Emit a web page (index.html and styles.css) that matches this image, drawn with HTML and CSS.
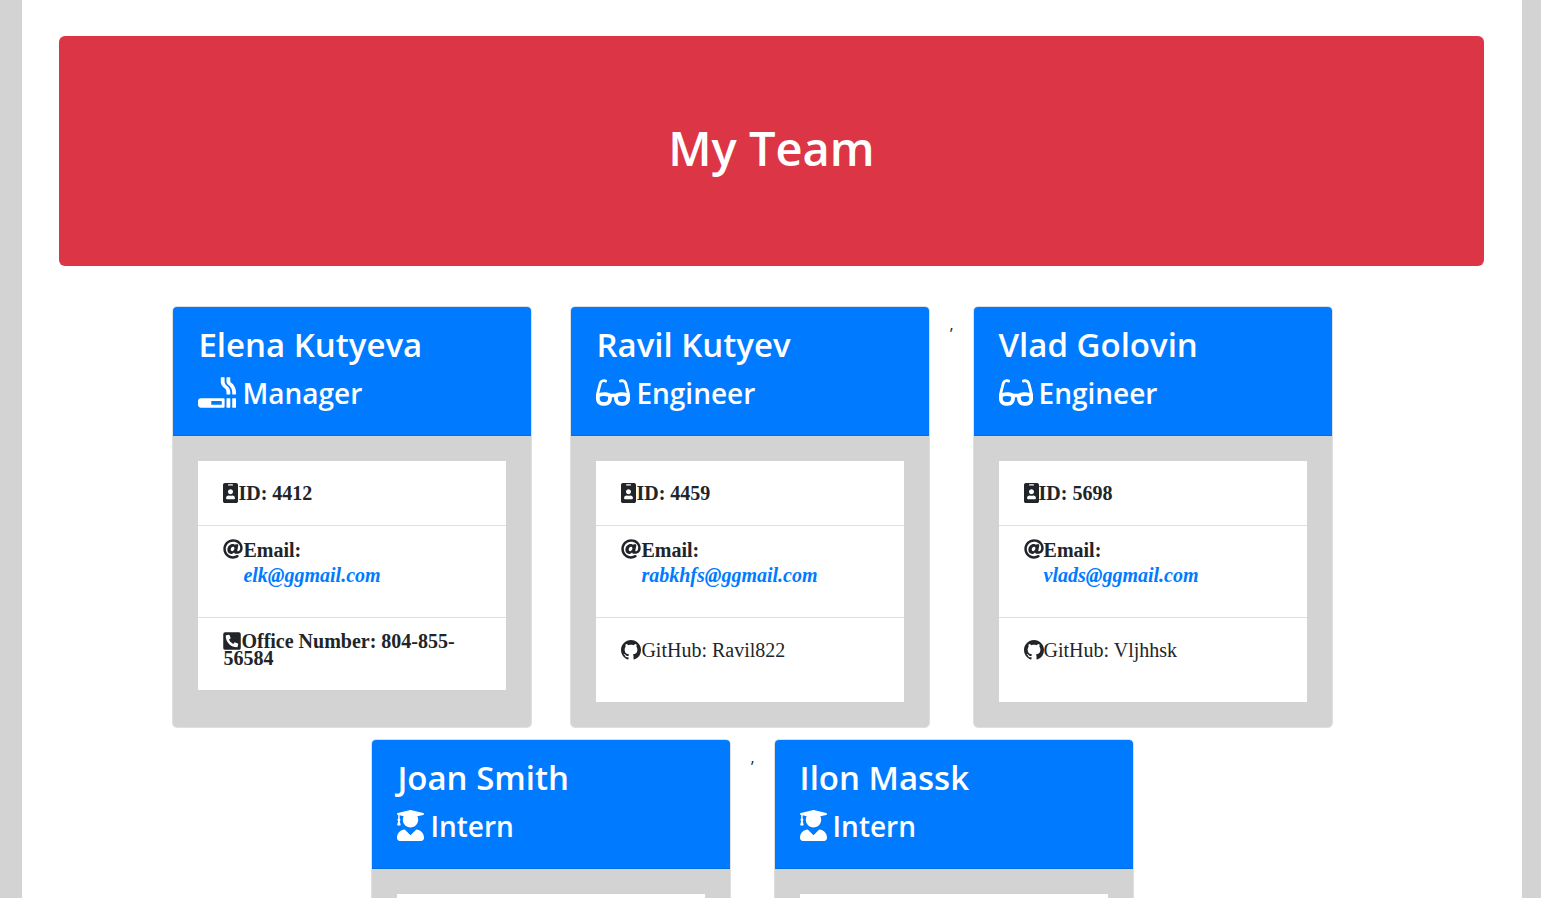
FILE: index.html
```
<!DOCTYPE html>
<html lang="en">
<head>
<meta charset="utf-8">
<title>My Team</title>
<link rel="stylesheet" href="styles.css">
</head>
<body>
<svg class="sprite" aria-hidden="true">
  <symbol id="smoking" viewBox="0 0 640 512"><path d="M632 352h-48c-4.400 0-8 3.600-8 8v144c0 4.400 3.600 8 8 8h48c4.400 0 8-3.600 8-8V360c0-4.400-3.600-8-8-8zM553.300 87.100c-5.700-3.800-9.300-10-9.300-16.800V8c0-4.400-3.600-8-8-8h-48c-4.400 0-8 3.600-8 8v62.300c0 22 10.200 43.400 28.600 55.400 42.200 27.300 67.400 73.800 67.400 124.300V280c0 4.400 3.600 8 8 8h48c4.400 0 8-3.600 8-8v-30.300c0-65.500-32.400-126.200-86.700-162.600zM432 352H48c-26.500 0-48 21.500-48 48v64c0 26.500 21.500 48 48 48h384c8.800 0 16-7.200 16-16V368c0-8.800-7.200-16-16-16zm-32 112H224v-64h176v64zm87.700-322.400C463.800 125 448 99.300 448 70.300V8c0-4.400-3.600-8-8-8h-48c-4.400 0-8 3.600-8 8v66.400c0 43.700 24.600 81.600 60.300 106.700 22.400 15.700 35.700 41.200 35.700 68.600V280c0 4.400 3.600 8 8 8h48c4.400 0 8-3.600 8-8v-30.300c0-43.300-21-83.400-56.300-108.100zM536 352h-48c-4.400 0-8 3.600-8 8v144c0 4.400 3.600 8 8 8h48c4.400 0 8-3.600 8-8V360c0-4.400-3.600-8-8-8z"/></symbol>
  <symbol id="glasses" viewBox="0 0 576 512"><path d="M574.100 280.370L528.750 98.660c-5.910-23.700-21.590-44.050-43-55.810-21.440-11.730-46.970-14.110-70.190-6.330l-15.250 5.080c-8.390 2.790-12.920 11.860-10.120 20.240l5.060 15.180c2.790 8.380 11.850 12.910 20.230 10.120l13.180-4.390c10.870-3.620 23-3.570 33.160 1.730 10.290 5.370 17.570 14.560 20.370 25.820l38.460 153.820c-22.190-6.810-49.790-12.460-81.200-12.460-34.770 0-73.980 7.020-114.850 26.740h-73.180c-40.870-19.740-80.080-26.750-114.860-26.750-31.420 0-59.020 5.650-81.210 12.460l38.460-153.830c2.790-11.250 10.090-20.450 20.380-25.810 10.160-5.300 22.280-5.350 33.150-1.730l13.170 4.390c8.380 2.790 17.440-1.740 20.230-10.120l5.060-15.180c2.800-8.380-1.730-17.450-10.120-20.240l-15.250-5.080c-23.220-7.780-48.750-5.410-70.190 6.330-21.410 11.770-37.090 32.110-43 55.800L1.900 280.370A64.218 64.218 0 0 0 0 295.860v70.250C0 429.010 51.580 480 115.200 480h37.120c60.280 0 110.370-45.940 114.880-105.370l2.930-38.630h35.750l2.930 38.630C313.310 434.060 363.400 480 423.680 480h37.120c63.620 0 115.200-50.990 115.200-113.880v-70.250c0-5.230-.64-10.430-1.900-15.500zm-370.720 89.420c-1.970 25.910-24.400 46.210-51.060 46.210H115.200C86.970 416 64 393.620 64 366.110v-37.540c18.120-6.490 43.420-12.920 72.580-12.920 23.860 0 47.260 4.330 69.930 12.920l-3.130 41.220zM512 366.120c0 27.510-22.970 49.880-51.200 49.880h-37.120c-26.670 0-49.100-20.300-51.060-46.210l-3.130-41.220c22.670-8.590 46.080-12.920 69.950-12.920 29.120 0 54.430 6.440 72.550 12.930v37.540z"/></symbol>
  <symbol id="graduate" viewBox="0 0 448 512"><path d="M319.400 320.600L224 416l-95.400-95.400C57.100 323.700 0 382.200 0 454.400v9.600c0 26.500 21.500 48 48 48h352c26.500 0 48-21.500 48-48v-9.600c0-72.200-57.100-130.700-128.600-133.800zM13.600 79.800l6.400 1.500v58.400c-7 4.200-12 11.500-12 20.300 0 8.400 4.600 15.400 11.100 19.700L3.500 242c-1.700 6.900 2.100 14 7.600 14h41.800c5.500 0 9.300-7.100 7.600-14l-15.600-62.300C51.400 175.400 56 168.400 56 160c0-8.800-5-16.100-12-20.300V87.100l66 15.900c-8.600 17.200-14 36.400-14 57 0 70.700 57.300 128 128 128s128-57.300 128-128c0-20.600-5.300-39.800-14-57l96.300-23.200c18.200-4.400 18.200-27.100 0-31.500l-190.400-46c-13-3.100-26.700-3.100-39.700 0L13.600 48.200c-18.100 4.400-18.100 27.200 0 31.600z"/></symbol>
  <symbol id="badge" viewBox="0 0 384 512"><path d="M336 0H48C21.500 0 0 21.500 0 48v416c0 26.500 21.500 48 48 48h288c26.500 0 48-21.500 48-48V48c0-26.500-21.500-48-48-48zM144 32h96c8.800 0 16 7.200 16 16s-7.200 16-16 16h-96c-8.800 0-16-7.200-16-16s7.200-16 16-16zm48 128c35.300 0 64 28.700 64 64s-28.700 64-64 64-64-28.700-64-64 28.700-64 64-64zm112 236.800c0 10.600-10 19.200-22.400 19.200H102.400C90 416 80 407.400 80 396.800v-19.200c0-31.800 30.100-57.600 67.200-57.600h5c12.300 5.100 25.700 8 39.800 8s27.600-2.900 39.800-8h5c37.100 0 67.200 25.800 67.200 57.600v19.200z"/></symbol>
  <symbol id="at" viewBox="0 0 512 512"><path d="M256 8C118.941 8 8 118.919 8 256c0 137.059 110.919 248 248 248 48.154 0 95.342-14.140 135.408-40.223 12.005-7.815 14.625-24.288 5.552-35.372l-10.177-12.433c-7.671-9.371-21.179-11.667-31.373-5.129C325.920 429.757 291.314 440 256 440c-101.458 0-184-82.542-184-184S154.542 72 256 72c100.139 0 184 57.619 184 160 0 38.786-21.093 79.742-58.170 83.693-17.349-.454-16.910-12.857-13.476-30.024l23.433-121.110C394.653 149.750 383.308 136 368.225 136h-44.981a13.518 13.518 0 0 0-13.432 11.993l-.01.092c-14.697-17.901-40.448-21.775-59.971-21.775-74.580 0-137.831 62.234-137.831 151.460 0 65.303 36.785 105.870 96 105.870 26.984 0 57.369-15.637 74.991-38.333 9.522 34.104 40.613 34.103 70.710 34.103C462.609 379.410 504 307.798 504 232 504 95.653 394.023 8 256 8zm-21.680 304.430c-22.249 0-36.070-15.623-36.070-40.771 0-44.993 30.779-72.729 58.630-72.729 22.292 0 35.601 15.241 35.601 40.770 0 45.061-33.875 72.730-58.161 72.730z"/></symbol>
  <symbol id="phone" viewBox="0 0 448 512"><path d="M400 32H48A48 48 0 0 0 0 80v352a48 48 0 0 0 48 48h352a48 48 0 0 0 48-48V80a48 48 0 0 0-48-48zm-16.390 307.370l-15 65A15 15 0 0 1 354 416C194 416 64 286.290 64 126a15.700 15.700 0 0 1 11.630-14.610l65-15A18.230 18.230 0 0 1 144 96a16.270 16.270 0 0 1 13.790 9.090l30 70A17.900 17.900 0 0 1 189 181a17 17 0 0 1-5.500 11.610l-37.890 31a231.910 231.910 0 0 0 110.780 110.780l31-37.890A17 17 0 0 1 299 291a17.850 17.850 0 0 1 5.910 1.210l70 30A16.250 16.250 0 0 1 384 336a17.410 17.410 0 0 1-.39 3.370z"/></symbol>
  <symbol id="github" viewBox="0 0 16 16"><path d="M8 0C3.580 0 0 3.580 0 8c0 3.540 2.290 6.530 5.470 7.590.4.07.55-.17.55-.38 0-.19-.01-.82-.01-1.490-2.010.37-2.530-.49-2.690-.94-.09-.23-.48-.94-.82-1.130-.28-.15-.68-.52-.01-.53.63-.01 1.080.58 1.230.82.72 1.210 1.870.87 2.330.66.07-.52.28-.87.51-1.070-1.780-.2-3.640-.89-3.640-3.950 0-.87.31-1.590.82-2.150-.08-.2-.36-1.020.08-2.120 0 0 .67-.21 2.200.82.64-.18 1.320-.27 2-.27s1.360.09 2 .27c1.530-1.040 2.200-.82 2.200-.82.44 1.100.16 1.920.08 2.120.51.56.82 1.270.82 2.150 0 3.070-1.870 3.750-3.650 3.950.29.25.54.73.54 1.480 0 1.070-.01 1.930-.01 2.200 0 .21.15.46.55.38A8.010 8.010 0 0 0 16 8c0-4.420-3.580-8-8-8z"/></symbol>
</svg>
<div class="page">
  <header class="hero"><h1>My Team</h1></header>
  <main class="team">
    <article class="card">
      <div class="card-header">
        <h2>Elena Kutyeva</h2>
        <h3><svg class="role-icon wide"><use href="#smoking"/></svg>Manager</h3>
      </div>
      <div class="card-body">
        <ul class="facts">
          <li class="id"><svg class="icon narrow"><use href="#badge"/></svg>ID: 4412</li>
          <li class="email"><svg class="icon"><use href="#at"/></svg><span>Email:<a href="mailto:elk@ggmail.com">elk@ggmail.com</a></span></li>
          <li class="office"><svg class="icon medium"><use href="#phone"/></svg>Office Number: 804-855-56584</li>
        </ul>
      </div>
    </article>
    <article class="card">
      <div class="card-header">
        <h2>Ravil Kutyev</h2>
        <h3><svg class="role-icon mid"><use href="#glasses"/></svg>Engineer</h3>
      </div>
      <div class="card-body">
        <ul class="facts">
          <li class="id"><svg class="icon narrow"><use href="#badge"/></svg>ID: 4459</li>
          <li class="email"><svg class="icon"><use href="#at"/></svg><span>Email:<a href="mailto:rabkhfs@ggmail.com">rabkhfs@ggmail.com</a></span></li>
          <li class="github"><svg class="icon"><use href="#github"/></svg>GitHub: Ravil822</li>
        </ul>
      </div>
    </article>
    <span class="separator">,</span>
    <article class="card">
      <div class="card-header">
        <h2>Vlad Golovin</h2>
        <h3><svg class="role-icon mid"><use href="#glasses"/></svg>Engineer</h3>
      </div>
      <div class="card-body">
        <ul class="facts">
          <li class="id"><svg class="icon narrow"><use href="#badge"/></svg>ID: 5698</li>
          <li class="email"><svg class="icon"><use href="#at"/></svg><span>Email:<a href="mailto:vlads@ggmail.com">vlads@ggmail.com</a></span></li>
          <li class="github"><svg class="icon"><use href="#github"/></svg>GitHub: Vljhhsk</li>
        </ul>
      </div>
    </article>
    <article class="card">
      <div class="card-header">
        <h2>Joan Smith</h2>
        <h3><svg class="role-icon slim"><use href="#graduate"/></svg>Intern</h3>
      </div>
      <div class="card-body"><ul class="facts"><li></li></ul></div>
    </article>
    <span class="separator">,</span>
    <article class="card">
      <div class="card-header">
        <h2>Ilon Massk</h2>
        <h3><svg class="role-icon slim"><use href="#graduate"/></svg>Intern</h3>
      </div>
      <div class="card-body"><ul class="facts"><li></li></ul></div>
    </article>
  </main>
</div>
</body>
</html>
```
FILE: styles.css
```
* { box-sizing: border-box; }
body {
  margin: 0;
  background: #d3d3d3;
  color: #212529;
  font-family: "Open Sans", "Noto Sans", sans-serif;
  font-size: 16px;
  line-height: 30px;
}
h1, h2, h3, ul { margin: 0; padding: 0; font-weight: 600; }
.sprite { display: none; }
.page {
  margin: 0 19px 0 22px;
  padding: 36px 38px 0 37px;
  min-height: 100vh;
  background: #fff;
}
.hero {
  padding: 82px 40px 88px;
  border-radius: 6px;
  background: #dc3545;
  color: #fff;
  text-align: center;
}
.hero h1 { font-size: 47px; line-height: 60px; }
.team {
  display: flex;
  flex-wrap: wrap;
  justify-content: center;
  padding: 40px 38px 0 0;
}
.card {
  display: flex;
  flex-direction: column;
  width: 360px;
  margin: 0 19px 11px;
  border: 1px solid #dfdfdf;
  border-radius: 5px;
  overflow: hidden;
}
.separator { padding-top: 3px; }
.card-header {
  padding: 17px 25px 20px;
  border-bottom: 1px solid #006fe0;
  background: #007bff;
  color: #fff;
}
.card-header h2 { font-size: 33px; line-height: 42px; }
.card-header h3 {
  display: flex;
  align-items: center;
  gap: 6px;
  margin-top: 5px;
  font-size: 28px;
  line-height: 44px;
}
.role-icon { height: 31px; margin-bottom: 1px; fill: currentColor; }
.wide { width: 38px; }
.mid { width: 34px; }
.slim { width: 27px; }
.card-body { flex: 1; padding: 25px; background: #d3d3d3; }
.facts {
  list-style: none;
  background: #fff;
  font-family: "Liberation Serif", serif;
  font-size: 20px;
  font-weight: 700;
}
.facts li { padding: 17px 25px; min-height: 64px; }
.facts li + li { border-top: 1px solid #dfdfdf; }
.icon {
  flex: none;
  width: 20px;
  height: 20px;
  fill: currentColor;
}
.narrow { width: 15px; }
.medium { width: 18px; }
.facts .id, .facts .email, .facts .github { display: flex; }
.facts .id { align-items: center; }
.facts .email { padding-top: 12px; padding-bottom: 29px; line-height: 25px; }
.email .icon { margin-top: 1px; }
.email a { display: block; color: #007bff; font-style: italic; text-decoration: none; }
.facts .office { padding-top: 16px; padding-bottom: 24px; line-height: 15px; }
.office .icon { margin-top: -10px; vertical-align: -3px; }
.facts .github { align-items: center; padding-bottom: 37px; font-weight: 400; }
```
